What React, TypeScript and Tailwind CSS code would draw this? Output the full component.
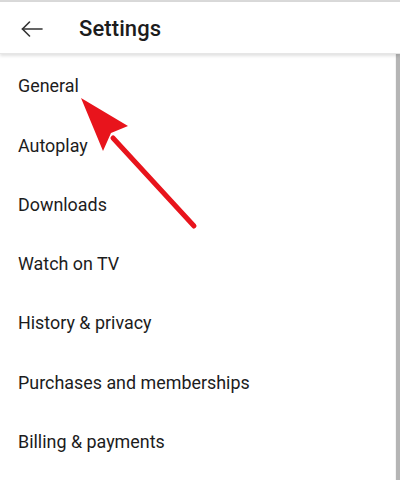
import React from 'react';

const items = [
  'General',
  'Autoplay',
  'Downloads',
  'Watch on TV',
  'History & privacy',
  'Purchases and memberships',
  'Billing & payments',
];

const App: React.FC = () => {
  return (
    <div className="relative w-[400px] h-[480px] overflow-hidden bg-white flex flex-col font-['Roboto',sans-serif] text-[#1c1c1c]">
      <div className="h-[2px] bg-[#d9d9d9]" />
      {/* Header */}
      <div className="h-[52px] flex items-center pt-[3px] bg-white shadow-[0_2px_3px_rgba(0,0,0,0.12)] border-b border-[#e6e6e6] z-10">
        <div className="w-[79px] flex items-center pl-[21px]">
          <svg width="22" height="16" viewBox="0 0 22 16" fill="none" stroke="#333" strokeWidth="1.6" strokeLinecap="round">
            <path d="M21 8H1.5" />
            <path d="M8.5 1L1.5 8l7 7" />
          </svg>
        </div>
        <h1 className="text-[22px] font-medium leading-none tracking-[0.1px]">Settings</h1>
      </div>

      <div className="flex-1 flex">
        <ul className="flex-1 flex flex-col pt-[3px]">
          {items.map((label) => (
            <li key={label} className="h-[59.3px] flex items-center pl-[18px] text-[17.9px]">
              {label}
            </li>
          ))}
        </ul>
        <div className="w-[5px] bg-[#b5b5b5] border-l border-[#f4f4f4]" />
      </div>

      {/* Red annotation arrow */}
      <svg className="absolute left-0 top-0 pointer-events-none" width="400" height="480" viewBox="0 0 400 480">
        <line x1="113" y1="138" x2="194" y2="226" stroke="#e8141c" strokeWidth="5" strokeLinecap="round" />
        <polygon points="81,98 128,126 111,133 103,151" fill="#e8141c" />
      </svg>
    </div>
  );
};

export default App;
